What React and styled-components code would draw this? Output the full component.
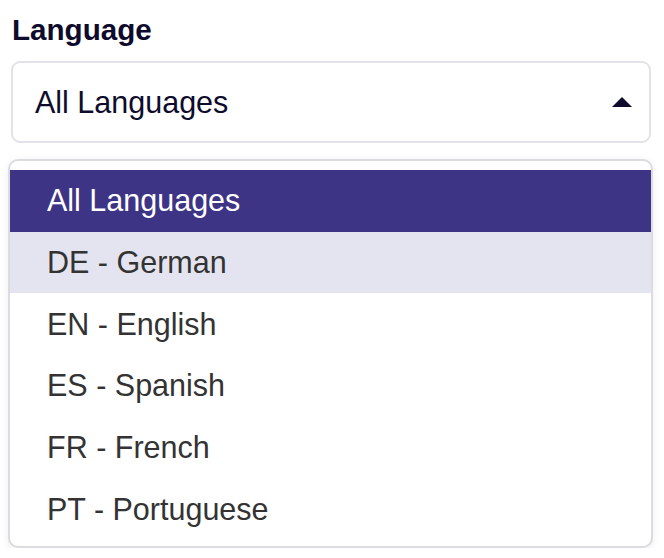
import React, { useState } from "react";
import styled, { createGlobalStyle } from "styled-components";

const GlobalStyle = createGlobalStyle`
  html, body {
    margin: 0;
    padding: 0;
    background: #ffffff;
  }
  body {
    font-family: "Liberation Sans", Arial, Helvetica, sans-serif;
  }
`;

const options = [
  { value: "all", label: "All Languages" },
  { value: "de", label: "DE - German" },
  { value: "en", label: "EN - English" },
  { value: "es", label: "ES - Spanish" },
  { value: "fr", label: "FR - French" },
  { value: "pt", label: "PT - Portuguese" },
];

const Wrapper = styled.div`
  width: 645px;
  padding: 13px 0 0 8px;
  display: flex;
  flex-direction: column;
`;

const Label = styled.label`
  margin-left: 4px;
  font-size: 29.6px;
  line-height: 34px;
  font-weight: bold;
  color: #0e0b2c;
`;

const SelectBox = styled.button`
  margin: 14px 2px 0 3px;
  height: 82px;
  box-sizing: border-box;
  border: 2px solid #e3e2ea;
  border-radius: 9px;
  background: #ffffff;
  padding: 0 17px 0 22px;
  display: flex;
  align-items: center;
  justify-content: space-between;
  font-family: inherit;
  font-size: 30.5px;
  color: #0e0b2c;
  cursor: pointer;
`;

const Caret = styled.svg`
  width: 20px;
  height: 10px;
  display: block;
`;

const List = styled.ul`
  list-style: none;
  margin: 16px 0 0 0;
  padding: 9px 0 6px 0;
  border: 2px solid #dcdbdf;
  border-radius: 10px;
  box-shadow: 0 2px 8px rgba(0, 0, 0, 0.07);
  background: #ffffff;
`;

const Option = styled.li`
  height: 61.7px;
  display: flex;
  align-items: center;
  padding-left: 37px;
  font-size: 30.5px;
  color: ${(p) => (p.$selected ? "#ffffff" : "#333333")};
  background: ${(p) =>
    p.$selected ? "#3e3486" : p.$hovered ? "#e4e4f0" : "transparent"};
  cursor: pointer;
`;

export default function App() {
  const [selected, setSelected] = useState("all");
  const [hovered, setHovered] = useState("de");
  const current = options.find((o) => o.value === selected);

  return (
    <>
      <GlobalStyle />
      <Wrapper>
        <Label>Language</Label>
        <SelectBox type="button">
          <span>{current.label}</span>
          <Caret viewBox="0 0 20 10">
            <path d="M10 0 L20 10 L0 10 Z" fill="#0e0b2c" />
          </Caret>
        </SelectBox>
        <List>
          {options.map((o) => (
            <Option
              key={o.value}
              $selected={o.value === selected}
              $hovered={o.value === hovered}
              onMouseEnter={() => setHovered(o.value)}
              onClick={() => setSelected(o.value)}
            >
              {o.label}
            </Option>
          ))}
        </List>
      </Wrapper>
    </>
  );
}
